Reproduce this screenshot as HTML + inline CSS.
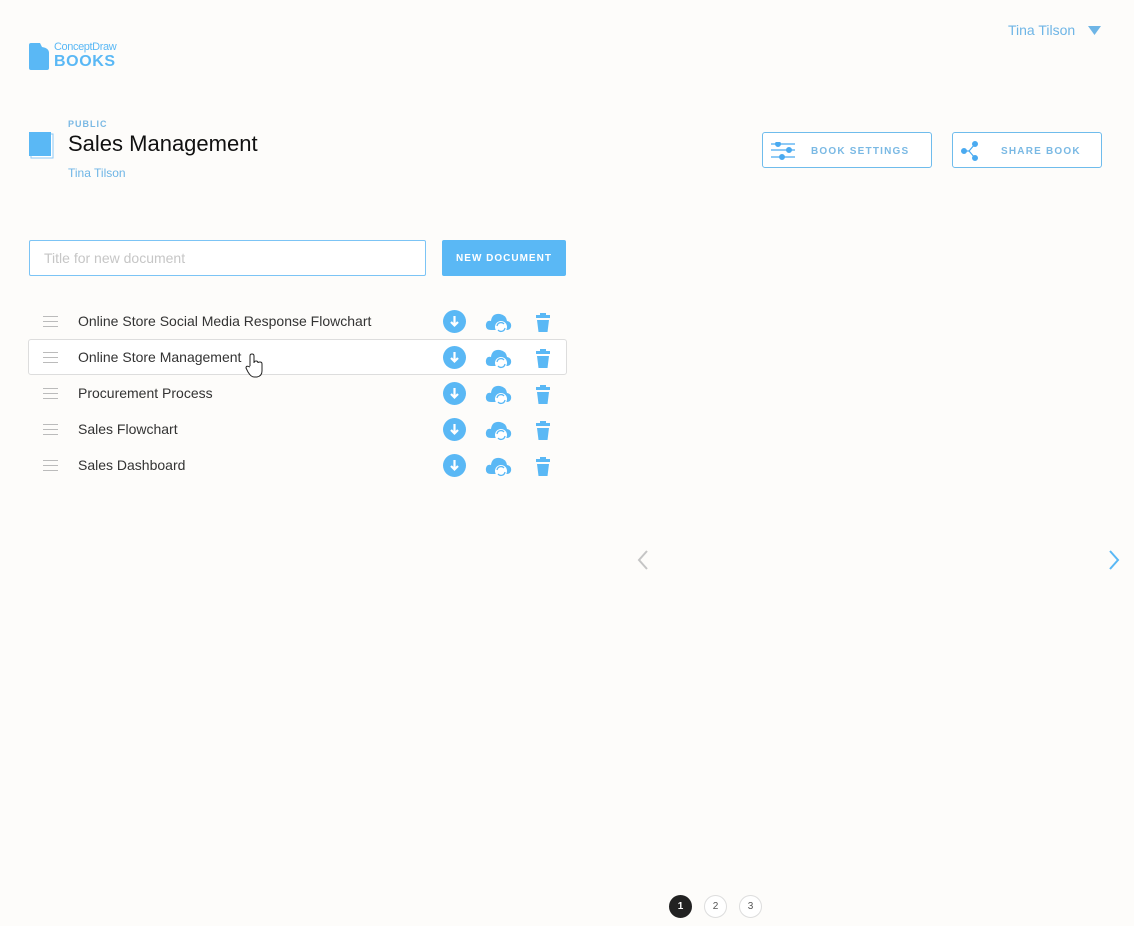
<!DOCTYPE html><html><head><style>
body{margin:0;width:1134px;height:926px;background:#fdfcfa;font-family:"Liberation Sans",sans-serif;position:relative;overflow:hidden}
.a{position:absolute}
.blue{color:#5ab8f5}
.btn{position:absolute;border:1px solid #6fbcec;border-radius:3px;height:34px;background:#fff;font-size:10px;font-weight:bold;letter-spacing:1.2px;color:#7ab9e4}
.row{position:absolute;left:29px;width:537px;height:34px}
.row .t{position:absolute;left:49px;top:9px;font-size:14px;color:#333}
.row .h{position:absolute;left:14px;top:12px;width:15px;height:9px;border-top:1px solid #bbb;border-bottom:1px solid #bbb}
.row .h:after{content:"";position:absolute;left:0;right:0;top:4px;border-top:1px solid #bbb}
.row svg{position:absolute;top:6px}
.pg{position:absolute;top:895px;width:23px;height:23px;border-radius:50%;border:1px solid #ddd;box-sizing:border-box;font-size:10px;text-align:center;line-height:21px;color:#555;background:#fff}
</style></head><body>
<svg class="a" style="left:29px;top:43px" width="20" height="27"><path d="M0 2Q0 0 2 0H11L13 4Q20 5 20 10V25Q20 27 18 27H2Q0 27 0 25Z" fill="#5ab8f5"/></svg>
<div class="a blue" style="left:54px;top:41px;font-size:11px;letter-spacing:-.4px">ConceptDraw</div>
<div class="a blue" style="left:54px;top:53px;font-size:16px;font-weight:bold;letter-spacing:.6px">BOOKS</div>
<div class="a" style="left:1008px;top:22px;font-size:14px;color:#6eb5e6">Tina Tilson</div>
<svg class="a" style="left:1088px;top:26px" width="13" height="9"><path d="M0 0H13L6.5 9Z" fill="#6eb5e6"/></svg>
<div class="a blue" style="left:68px;top:119px;font-size:9px;font-weight:bold;letter-spacing:1px;color:#7ab9e4">PUBLIC</div>
<svg class="a" style="left:29px;top:132px" width="25" height="27"><rect x="2" y="2" width="22" height="24" fill="#fff" stroke="#8cc9f5"/><rect x="0" y="0" width="22" height="24" fill="#5ab8f5"/></svg>
<div class="a" style="left:68px;top:131px;font-size:22px;color:#111">Sales Management</div>
<div class="a" style="left:68px;top:166px;font-size:12px;color:#6eb5e6">Tina Tilson</div>
<div class="btn" style="left:762px;top:132px;width:168px"><svg class="a" style="left:8px;top:9px" width="26" height="18" stroke="#4aaaf0" fill="#4aaaf0"><path d="M0 2H24M0 8H24M0 15H24" stroke-width="1.2"/><circle cx="7" cy="2" r="2.5"/><circle cx="18" cy="8" r="2.5"/><circle cx="11" cy="15" r="2.5"/></svg><span class="a" style="left:48px;top:13px">BOOK SETTINGS</span></div>
<div class="btn" style="left:952px;top:132px;width:148px"><svg class="a" style="left:8px;top:7px" width="22" height="22" stroke="#4aaaf0" fill="#4aaaf0"><path d="M3 11H8L14 4M8 11L14 18" stroke-width="1.2" fill="none"/><circle cx="3" cy="11" r="2.5"/><circle cx="14" cy="4" r="2.5"/><circle cx="14" cy="18" r="2.5"/></svg><span class="a" style="left:48px;top:13px">SHARE BOOK</span></div>
<div class="a" style="left:29px;top:240px;width:395px;height:34px;border:1px solid #7cc4f5;border-radius:2px;background:#fff"><span class="a" style="left:14px;top:9px;font-size:14px;color:#c6c6c6">Title for new document</span></div>
<div class="a" style="left:442px;top:240px;width:124px;height:36px;background:#5ab8f5;border-radius:2px;color:#fff;font-size:10px;font-weight:bold;letter-spacing:1px;text-align:center;line-height:37px">NEW DOCUMENT</div>
<div id="rows"></div>
<svg class="a" style="left:636px;top:549px" width="14" height="22"><path d="M11 2L3 11L11 20" stroke="#c5c5c5" stroke-width="2" fill="none"/></svg>
<svg class="a" style="left:1107px;top:549px" width="14" height="22"><path d="M3 2L11 11L3 20" stroke="#5ab8f5" stroke-width="2" fill="none"/></svg>
<div class="pg" style="left:669px;background:#222;color:#fff;border-color:#222;font-weight:bold">1</div>
<div class="pg" style="left:704px">2</div>
<div class="pg" style="left:739px">3</div>
<script>
var n=["Online Store Social Media Response Flowchart","Online Store Management","Procurement Process","Sales Flowchart","Sales Dashboard"],h="";
n.forEach(function(t,i){var y=304+i*36;
h+='<div class="row" style="top:'+y+'px;'+(i==1?'border:1px solid #ddd;border-radius:3px;background:#fff;margin:-1px 0 0 -1px':'')+'"><div class="h"></div><div class="t">'+t+'</div>'+
'<svg style="left:414px" width="23" height="23"><circle cx="11.5" cy="11.5" r="11.5" fill="#5ab8f5"/><path d="M11.5 6V15.5M8 12L11.5 15.5L15 12" stroke="#fff" stroke-width="2.2" fill="none"/></svg>'+
'<svg style="left:456px" width="28" height="24"><path d="M6 20Q0 20 1 14Q2 10 6 11Q7 3 15 4Q21 5 22 11Q27 12 26 17Q25 20 22 20Z" fill="#5ab8f5"/><circle cx="16" cy="17" r="6" fill="#fff"/><path d="M12 16A4 4 0 0 1 19 14M20 18A4 4 0 0 1 13 20" stroke="#5ab8f5" stroke-width="1.3" fill="none"/></svg>'+
'<svg style="left:506px" width="16" height="24"><rect x="5" y="3" width="6" height="3" fill="#5ab8f5"/><rect x="1" y="5" width="14" height="3" fill="#5ab8f5"/><path d="M2 10H14L12.5 22H3.5Z" fill="#5ab8f5"/></svg></div>';});
document.getElementById("rows").outerHTML=h;
</script>
<svg class="a" style="left:245px;top:353px" width="20" height="26"><path d="M5 13V3Q5 1 7 1Q9 1 9 3V10Q9 8 11 8Q13 8 13 10Q13 9 15 9Q17 9 17 11V18Q17 23 12 24H9Q6 24 3 19L1 15Q1 12 5 14" fill="#fff" stroke="#222" stroke-width="1"/></svg>
</body></html>
